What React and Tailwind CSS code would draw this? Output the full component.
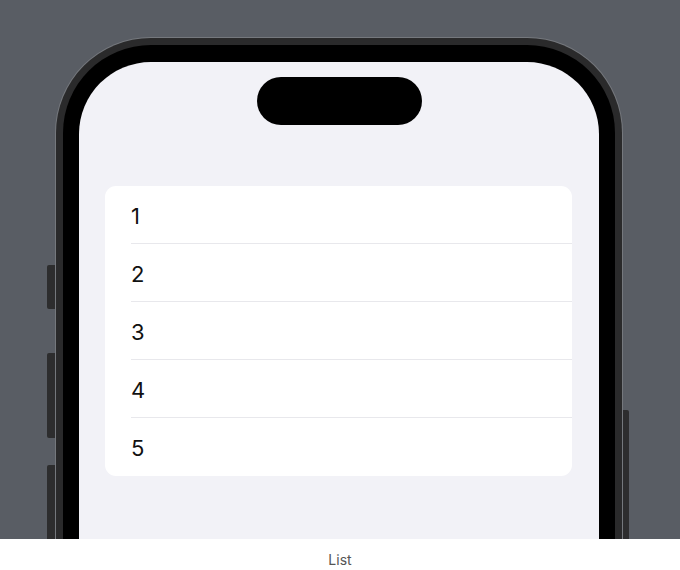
export default function App() {
  const items = [1, 2, 3, 4, 5];
  return (
    <div className="w-[680px] h-[570px] bg-white flex flex-col" style={{ fontFamily: 'Inter, "Noto Sans", sans-serif' }}>
      <div className="h-[539px] bg-[#595d64] overflow-hidden relative">
        <div className="relative ml-[55px] mt-[37px] w-[568px]">
          {/* side buttons */}
          <div className="absolute left-[-8px] top-[228px] w-[8px] h-[44px] bg-[#2d2d2e] rounded-l-[2px]" />
          <div className="absolute left-[-8px] top-[316px] w-[8px] h-[85px] bg-[#2d2d2e] rounded-l-[2px]" />
          <div className="absolute left-[-8px] top-[428px] w-[8px] h-[120px] bg-[#2d2d2e] rounded-l-[2px]" />
          <div className="absolute right-[-6px] top-[373px] w-[6px] h-[160px] bg-[#2d2d2e] rounded-r-[2px]" />
          <div className="bg-[#75787d] rounded-[96px] p-px">
            <div className="bg-[#2a2a2b] rounded-[95px] p-[7px]">
              <div className="bg-black rounded-[88px] p-[16px] pt-[17px]">
                <div className="bg-[#f2f2f7] rounded-[72px] h-[600px] flex flex-col">
                  <div className="mt-[15px] mx-auto w-[165px] h-[48px] bg-black rounded-full" />
                  <div className="mt-[61px] ml-[26px] mr-[27px] bg-white rounded-[11px] overflow-hidden">
                    {items.map((n, i) => (
                      <div key={n} className="pl-[26px]">
                        <div
                          className={
                            "h-[58px] flex items-center pt-[3px] text-[22px] text-[#111111] " +
                            (i < items.length - 1 ? "border-b border-[#e8e8ec]" : "")
                          }
                        >
                          {n}
                        </div>
                      </div>
                    ))}
                  </div>
                </div>
              </div>
            </div>
          </div>
        </div>
      </div>
      <div className="flex-1 flex justify-center pt-[11px]">
        <span className="text-[14px] leading-[20px] text-[#555555]">List</span>
      </div>
    </div>
  );
}
